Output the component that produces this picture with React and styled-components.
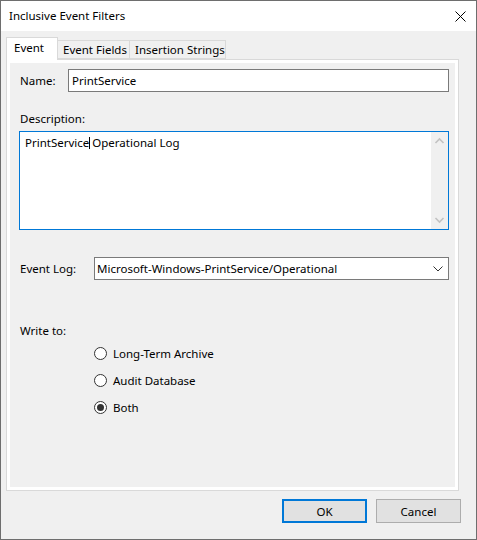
import React from 'react';
import styled, { createGlobalStyle } from 'styled-components';

const Global = createGlobalStyle`
  html, body {
    margin: 0;
    padding: 0;
    background: #5a5a5a;
  }
  * { box-sizing: border-box; }
`;

const font = `"Noto Sans", "Liberation Sans", sans-serif`;

export default function App() {
  return (
    <>
      <Global />
      <Window>
        <TitleBar>
          <Title>Inclusive Event Filters</Title>
          <CloseButton aria-label="Close">
            <svg width="11" height="11" viewBox="0 0 11 11">
              <path d="M0.5 0.5 L10.5 10.5 M10.5 0.5 L0.5 10.5" stroke="#000" strokeWidth="1" fill="none" />
            </svg>
          </CloseButton>
        </TitleBar>

        <Body>
          <TabStrip>
            <Tab $active $w={52}>Event</Tab>
            <Tab $w={72}>Event Fields</Tab>
            <Tab $w={96}>Insertion Strings</Tab>
          </TabStrip>

          <Panel>
            <Page>
              <FieldRow>
                <Label $w={48}>Name:</Label>
                <TextBox>PrintService</TextBox>
              </FieldRow>

              <BlockLabel>Description:</BlockLabel>
              <TextArea>
                <AreaText>
                  PrintService<Caret />Operational Log
                </AreaText>
                <ScrollBar>
                  <svg width="17" height="10" viewBox="0 0 17 10">
                    <path d="M4.5 7 L8.5 3 L12.5 7" stroke="#c2c2c2" strokeWidth="1.6" fill="none" />
                  </svg>
                  <svg width="17" height="10" viewBox="0 0 17 10">
                    <path d="M4.5 3 L8.5 7 L12.5 3" stroke="#c2c2c2" strokeWidth="1.6" fill="none" />
                  </svg>
                </ScrollBar>
              </TextArea>

              <FieldRow $top={27}>
                <Label $w={74}>Event Log:</Label>
                <Select>
                  <span>Microsoft-Windows-PrintService/Operational</span>
                  <svg width="10" height="6" viewBox="0 0 10 6">
                    <path d="M0.5 0.5 L5 5 L9.5 0.5" stroke="#333" strokeWidth="1" fill="none" />
                  </svg>
                </Select>
              </FieldRow>

              <BlockLabel $top={43}>Write to:</BlockLabel>
              <RadioGroup>
                <RadioRow>
                  <Radio />
                  Long-Term Archive
                </RadioRow>
                <RadioRow>
                  <Radio />
                  Audit Database
                </RadioRow>
                <RadioRow>
                  <Radio $checked />
                  Both
                </RadioRow>
              </RadioGroup>
            </Page>
          </Panel>

          <ButtonBar>
            <Button $default>OK</Button>
            <Button>Cancel</Button>
          </ButtonBar>
        </Body>
      </Window>
    </>
  );
}

const Window = styled.div`
  width: 477px;
  height: 540px;
  border: 1px solid #6e6e6e;
  background: #f0f0f0;
  font-family: ${font};
  font-size: 11.5px;
  color: #000;
  display: flex;
  flex-direction: column;
`;

const TitleBar = styled.div`
  height: 30px;
  background: #fff;
  display: flex;
  align-items: center;
  justify-content: space-between;
  padding-left: 8px;
`;

const Title = styled.div`
  margin-top: -1px;
`;

const CloseButton = styled.div`
  width: 46px;
  height: 30px;
  display: flex;
  align-items: center;
  justify-content: center;
  margin-right: -7px;
`;

const Body = styled.div`
  flex: 1;
  padding: 6px 17px 0 5px;
  display: flex;
  flex-direction: column;
`;

const TabStrip = styled.div`
  display: flex;
  align-items: flex-end;
  height: 22px;
  position: relative;
  z-index: 1;
`;

const Tab = styled.div`
  width: ${p => p.$w}px;
  height: ${p => (p.$active ? 23 : 19)}px;
  margin-bottom: ${p => (p.$active ? -1 : 0)}px;
  background: ${p => (p.$active ? '#fff' : '#f0f0f0')};
  border: 1px solid #d9d9d9;
  border-bottom: ${p => (p.$active ? 'none' : '1px solid #d9d9d9')};
  border-left: ${p => (p.$active ? '1px solid #d9d9d9' : 'none')};
  display: flex;
  align-items: ${p => (p.$active ? 'flex-start' : 'center')};
  padding-top: ${p => (p.$active ? 2 : 0)}px;
  padding-left: ${p => (p.$active ? 7 : 5)}px;
  white-space: nowrap;
`;

const Panel = styled.div`
  height: 432px;
  border: 1px solid #d9d9d9;
  background: #fff;
  padding: 3px;
`;

const Page = styled.div`
  height: 100%;
  background: #f0f0f0;
  padding: 6px 6px 0 9px;
  display: flex;
  flex-direction: column;
`;

const FieldRow = styled.div`
  display: flex;
  align-items: center;
  margin-top: ${p => p.$top || 0}px;
  padding-left: 1px;
`;

const Label = styled.div`
  width: ${p => p.$w}px;
  flex: none;
`;

const BlockLabel = styled.div`
  line-height: 16px;
  margin-top: ${p => p.$top || 19}px;
  margin-bottom: 4px;
  padding-left: 1px;
`;

const TextBox = styled.div`
  flex: 1;
  height: 23px;
  background: #fff;
  border: 1px solid #7a7a7a;
  display: flex;
  align-items: center;
  padding-left: 3px;
`;

const TextArea = styled.div`
  height: 99px;
  background: #fff;
  border: 1px solid #0078d7;
  display: flex;
`;

const AreaText = styled.div`
  flex: 1;
  padding: 3px 0 0 5px;
  line-height: 16px;
`;

const Caret = styled.span`
  display: inline-block;
  width: 1px;
  height: 12px;
  background: #000;
  vertical-align: -2px;
  margin: 0 2px 0 0;
`;

const ScrollBar = styled.div`
  width: 17px;
  background: #f0f0f0;
  display: flex;
  flex-direction: column;
  justify-content: space-between;
  padding: 4px 0;
`;

const Select = styled.div`
  flex: 1;
  height: 23px;
  background: #fff;
  border: 1px solid #7a7a7a;
  display: flex;
  align-items: center;
  justify-content: space-between;
  padding: 0 5px 0 2px;
`;

const RadioGroup = styled.div`
  display: flex;
  flex-direction: column;
  gap: 7px;
  padding-left: 75px;
`;

const RadioRow = styled.div`
  height: 20px;
  display: flex;
  align-items: center;
  gap: 6px;
`;

const Radio = styled.span`
  width: 13px;
  height: 13px;
  border-radius: 50%;
  border: 1px solid #333;
  background: #fff;
  display: inline-flex;
  align-items: center;
  justify-content: center;
  &::after {
    content: '';
    width: 7px;
    height: 7px;
    border-radius: 50%;
    background: ${p => (p.$checked ? '#333' : 'transparent')};
  }
`;

const ButtonBar = styled.div`
  display: flex;
  justify-content: flex-end;
  gap: 9px;
  margin-top: 8px;
  margin-right: -2px;
`;

const Button = styled.div`
  width: 85px;
  height: 24px;
  background: #e1e1e1;
  border: ${p => (p.$default ? '2px solid #0078d7' : '1px solid #adadad')};
  display: flex;
  align-items: center;
  justify-content: center;
`;
